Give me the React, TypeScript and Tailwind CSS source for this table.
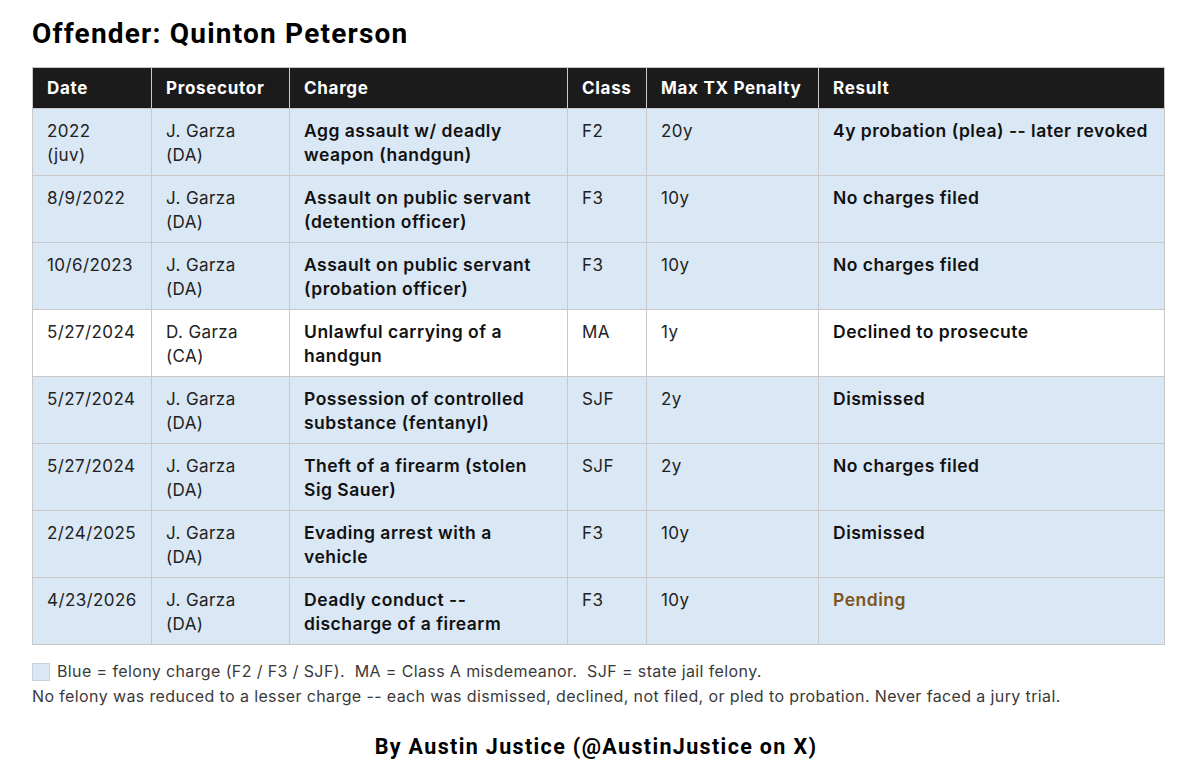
type Row = {
  date: string[];
  pros: string[];
  charge: string[];
  cls: string;
  max: string;
  result: string;
  blue: boolean;
  pending?: boolean;
};

const rows: Row[] = [
  { date: ["2022", "(juv)"], pros: ["J. Garza", "(DA)"], charge: ["Agg assault w/ deadly", "weapon (handgun)"], cls: "F2", max: "20y", result: "4y probation (plea) -- later revoked", blue: true },
  { date: ["8/9/2022"], pros: ["J. Garza", "(DA)"], charge: ["Assault on public servant", "(detention officer)"], cls: "F3", max: "10y", result: "No charges filed", blue: true },
  { date: ["10/6/2023"], pros: ["J. Garza", "(DA)"], charge: ["Assault on public servant", "(probation officer)"], cls: "F3", max: "10y", result: "No charges filed", blue: true },
  { date: ["5/27/2024"], pros: ["D. Garza", "(CA)"], charge: ["Unlawful carrying of a", "handgun"], cls: "MA", max: "1y", result: "Declined to prosecute", blue: false },
  { date: ["5/27/2024"], pros: ["J. Garza", "(DA)"], charge: ["Possession of controlled", "substance (fentanyl)"], cls: "SJF", max: "2y", result: "Dismissed", blue: true },
  { date: ["5/27/2024"], pros: ["J. Garza", "(DA)"], charge: ["Theft of a firearm (stolen", "Sig Sauer)"], cls: "SJF", max: "2y", result: "No charges filed", blue: true },
  { date: ["2/24/2025"], pros: ["J. Garza", "(DA)"], charge: ["Evading arrest with a", "vehicle"], cls: "F3", max: "10y", result: "Dismissed", blue: true },
  { date: ["4/23/2026"], pros: ["J. Garza", "(DA)"], charge: ["Deadly conduct --", "discharge of a firearm"], cls: "F3", max: "10y", result: "Pending", blue: true, pending: true },
];

const headers = ["Date", "Prosecutor", "Charge", "Class", "Max TX Penalty", "Result"];
const widths = ["w-[119px]", "w-[138px]", "w-[278px]", "w-[79px]", "w-[172px]", "w-[346px]"];

function Lines({ lines }: { lines: string[] }) {
  return (
    <>
      {lines.map((l, i) => (
        <div key={i} className="whitespace-nowrap">{l}</div>
      ))}
    </>
  );
}

const cell = "border border-[#c9c9c9] px-[14px] pt-[10px] pb-[8px] align-top";
const plain = "text-[17px] tracking-[0.4px] text-[#222]";
const strong = "text-[17.5px] tracking-[0.5px] font-semibold";

export default function App() {
  return (
    <div className="w-[1192px] h-[774px] bg-white text-[#111] font-['Inter','Noto_Sans',sans-serif] overflow-hidden">
      <div className="pl-[32px] pt-[16px]">
        <h1 className="font-['Roboto',sans-serif] font-bold text-[28px] leading-[35px] tracking-[1.2px] text-black">
          Offender: Quinton Peterson
        </h1>
        <table className="mt-[16px] w-[1133px] border-collapse table-fixed leading-[24px]">
          <thead>
            <tr className="bg-[#1b1b1b] text-white h-[41px]">
              {headers.map((h, i) => (
                <th
                  key={h}
                  className={`${widths[i]} border border-[#c9c9c9] px-[14px] text-left text-[17px] font-bold tracking-[0.7px] align-middle`}
                >
                  {h}
                </th>
              ))}
            </tr>
          </thead>
          <tbody>
            {rows.map((r, i) => (
              <tr key={i} className={`${r.blue ? "bg-[#dae7f4]" : "bg-white"} h-[67px]`}>
                <td className={`${cell} ${plain}`}>
                  <Lines lines={r.date} />
                </td>
                <td className={`${cell} ${plain}`}>
                  <Lines lines={r.pros} />
                </td>
                <td className={`${cell} ${strong} text-[#111]`}>
                  <Lines lines={r.charge} />
                </td>
                <td className={`${cell} ${plain}`}>{r.cls}</td>
                <td className={`${cell} ${plain}`}>{r.max}</td>
                <td className={`${cell} ${strong} whitespace-nowrap ${r.pending ? "text-[#7a5520]" : "text-[#111]"}`}>
                  {r.result}
                </td>
              </tr>
            ))}
          </tbody>
        </table>
        <div className="mt-[14px] text-[16px] leading-[25px] tracking-[0.38px] text-[#3a3a3a]">
          <div className="flex items-center gap-[7px]">
            <span className="inline-block w-[18px] h-[18px] bg-[#dae7f4] border border-[#c9d3de]" />
            <span className="whitespace-pre">Blue = felony charge (F2 / F3 / SJF).  MA = Class A misdemeanor.  SJF = state jail felony.</span>
          </div>
          <div className="whitespace-nowrap">
            No felony was reduced to a lesser charge -- each was dismissed, declined, not filed, or pled to probation. Never faced a jury trial.
          </div>
        </div>
      </div>
      <div className="mt-[24px] text-center font-['Roboto',sans-serif] font-bold text-[21.5px] leading-[28px] tracking-[1.35px] text-black">
        By Austin Justice (@AustinJustice on X)
      </div>
    </div>
  );
}
